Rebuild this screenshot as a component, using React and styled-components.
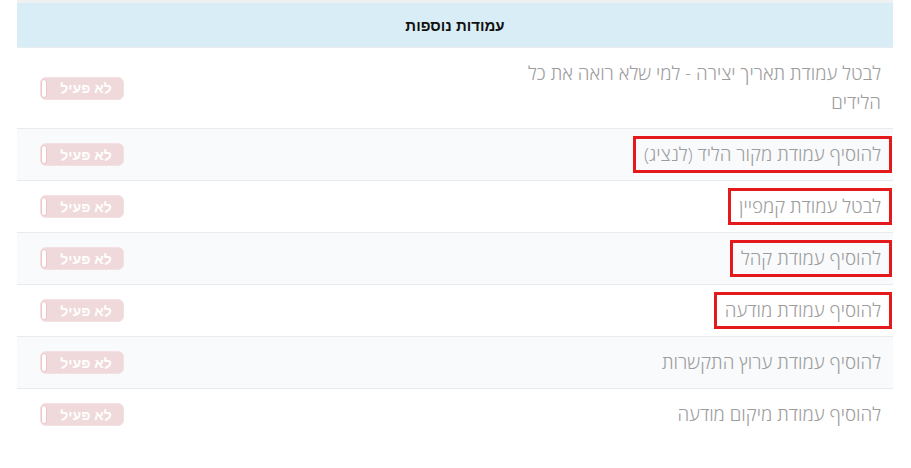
import styled, { createGlobalStyle } from "styled-components";

const GlobalStyle = createGlobalStyle`
  body {
    margin: 0;
    background: #fff;
    font-family: "Open Sans", "Noto Sans", "Liberation Sans", sans-serif;
  }
`;

const Page = styled.div`
  padding: 0 18px 0 17px;
`;

const Table = styled.table`
  width: 100%;
  direction: rtl;
  border-collapse: collapse;
  border-top: 3px solid #eef0f2;
`;

const HeadCell = styled.th`
  height: 44px;
  padding: 0;
  background: #d9edf6;
  color: #111;
  font-family: "Liberation Sans", Arial, sans-serif;
  font-size: 15px;
  font-weight: bold;
  text-align: center;
`;

const Row = styled.tr`
  background: ${(p) => (p.$shaded ? "#f9fafc" : "#fff")};
  border-top: 1px solid #e8ebef;
`;

const TextCell = styled.td`
  width: 46%;
  padding: 7px 1px 7px 0;
  text-align: right;
  vertical-align: middle;
`;

const Label = styled.span`
  display: inline-block;
  padding: 1px 8px;
  border: 3px solid ${(p) => (p.$marked ? "#e3191c" : "transparent")};
  color: #9d9d9d;
  font-size: 18.8px;
  font-weight: 300;
  line-height: 29px;
`;

const SwitchCell = styled.td`
  padding: 0 23px;
  direction: ltr;
  text-align: left;
  vertical-align: middle;
`;

const Switch = styled.div`
  position: relative;
  width: 84px;
  height: 23px;
  box-sizing: border-box;
  border: 1px solid #f3e0e1;
  border-radius: 6px;
  background: #f0d9da;
  display: flex;
  align-items: center;
  justify-content: center;
  padding-left: 8px;
  color: #fff;
  font-family: "Liberation Sans", Arial, sans-serif;
  font-size: 14px;
  font-weight: bold;
  direction: rtl;
`;

const Knob = styled.span`
  position: absolute;
  left: 0;
  top: 1px;
  width: 6px;
  height: 19px;
  box-sizing: border-box;
  border: 1px solid #ecc5c8;
  border-radius: 4px;
  background: #fff;
`;

const items = [
  { text: "לבטל עמודת תאריך יצירה - למי שלא רואה את כל הלידים" },
  { text: "להוסיף עמודת מקור הליד (לנציג)", marked: true },
  { text: "לבטל עמודת קמפיין", marked: true },
  { text: "להוסיף עמודת קהל", marked: true },
  { text: "להוסיף עמודת מודעה", marked: true },
  { text: "להוסיף עמודת ערוץ התקשרות" },
  { text: "להוסיף עמודת מיקום מודעה" },
];

export default function App() {
  return (
    <Page>
      <GlobalStyle />
      <Table>
        <thead>
          <tr>
            <HeadCell colSpan={2}>עמודות נוספות</HeadCell>
          </tr>
        </thead>
        <tbody>
          {items.map((item, i) => (
            <Row key={i} $shaded={i % 2 === 1}>
              <TextCell>
                <Label $marked={item.marked}>{item.text}</Label>
              </TextCell>
              <SwitchCell>
                <Switch>
                  <Knob />
                  לא פעיל
                </Switch>
              </SwitchCell>
            </Row>
          ))}
        </tbody>
      </Table>
    </Page>
  );
}
